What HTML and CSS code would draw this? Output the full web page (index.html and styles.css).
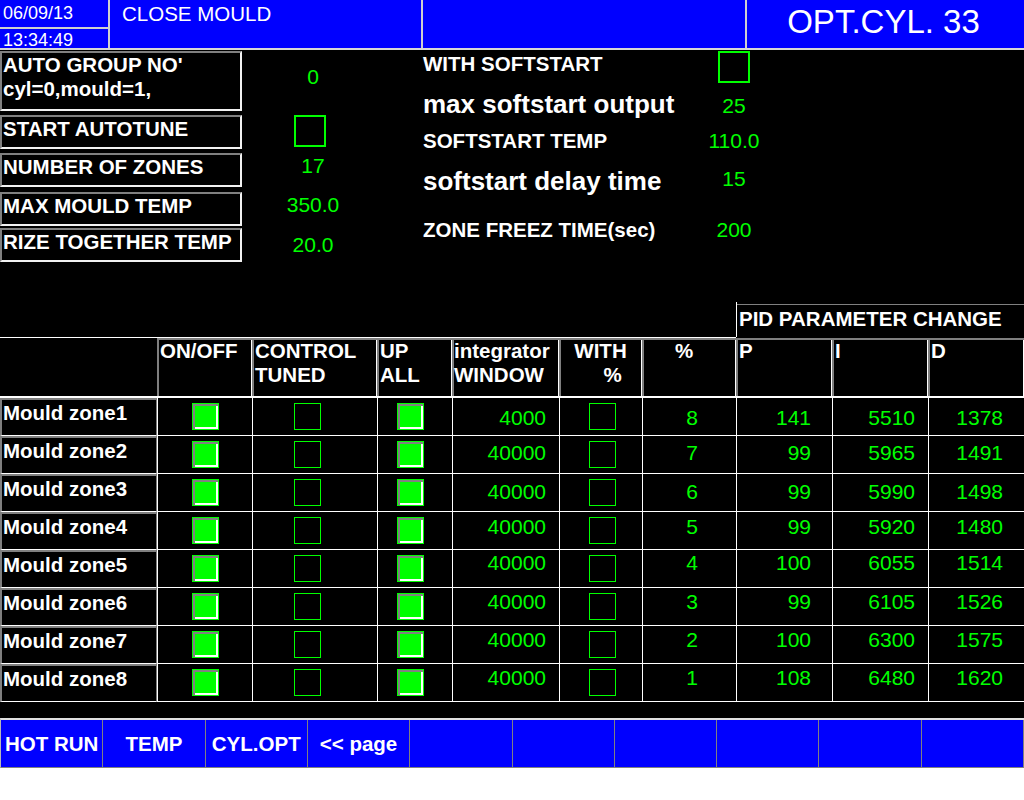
FILE: index.html
```html
<!DOCTYPE html>
<html>
<head>
<meta charset="utf-8">
<title>OPT.CYL. 33</title>
<link rel="stylesheet" href="styles.css">
</head>
<body>
<div class="screen">
  <header class="topbar">
    <div class="clock">
      <div class="date">06/09/13</div>
      <div class="time">13:34:49</div>
    </div>
    <div class="status">CLOSE MOULD</div>
    <div class="blank"></div>
    <div class="pagetitle">OPT.CYL. 33</div>
  </header>

  <section class="settings">
    <div class="lcol">
      <div class="lrow r1"><div class="lbox">AUTO GROUP NO'<br>cyl=0,mould=1,</div><div class="lval up">0</div></div>
      <div class="lrow r2"><div class="lbox">START AUTOTUNE</div><div class="lval chkval"><span class="cb big"></span></div></div>
      <div class="lrow r3"><div class="lbox">NUMBER OF ZONES</div><div class="lval up">17</div></div>
      <div class="lrow r4"><div class="lbox">MAX MOULD TEMP</div><div class="lval up">350.0</div></div>
      <div class="lrow r5"><div class="lbox">RIZE TOGETHER TEMP</div><div class="lval">20.0</div></div>
    </div>
    <div class="rcol">
      <div class="rrow rr1"><div class="rlabel">WITH SOFTSTART</div><div class="rval"><span class="cb big"></span></div></div>
      <div class="rrow rr2"><div class="rlabel">max softstart output</div><div class="rval">25</div></div>
      <div class="rrow rr3"><div class="rlabel">SOFTSTART TEMP</div><div class="rval">110.0</div></div>
      <div class="rrow rr4"><div class="rlabel">softstart delay time</div><div class="rval">15</div></div>
      <div class="rrow rr5"><div class="rlabel">ZONE FREEZ TIME(sec)</div><div class="rval">200</div></div>
    </div>
  </section>

  <section class="zones">
    <div class="pidrow"><div class="pid"><div class="pid-in">PID PARAMETER CHANGE</div></div></div>
    <div class="thead">
      <div class="hc first"></div>
      <div class="hc">ON/OFF</div>
      <div class="hc">CONTROL<br>TUNED</div>
      <div class="hc">UP<br>ALL</div>
      <div class="hc tight">integrator<br>WINDOW</div>
      <div class="hc center">WITH<br><span class="pct2">%</span></div>
      <div class="hc pct">%</div>
      <div class="hc pidc">P</div>
      <div class="hc pidc">I</div>
      <div class="hc pidc">D</div>
    </div>

    <div class="trow k1">
      <div class="name">Mould zone1</div>
      <div class="dc c-on"><span class="cb on"></span></div>
      <div class="dc c-ct"><span class="cb"></span></div>
      <div class="dc c-up"><span class="cb on"></span></div>
      <div class="dc num n-win">4000</div>
      <div class="dc c-wp"><span class="cb"></span></div>
      <div class="dc num n-pct">8</div>
      <div class="dc num n-p">141</div>
      <div class="dc num n-i">5510</div>
      <div class="dc num n-d">1378</div>
    </div>
    <div class="trow k2">
      <div class="name">Mould zone2</div>
      <div class="dc c-on"><span class="cb on"></span></div>
      <div class="dc c-ct"><span class="cb"></span></div>
      <div class="dc c-up"><span class="cb on"></span></div>
      <div class="dc num n-win">40000</div>
      <div class="dc c-wp"><span class="cb"></span></div>
      <div class="dc num n-pct">7</div>
      <div class="dc num n-p">99</div>
      <div class="dc num n-i">5965</div>
      <div class="dc num n-d">1491</div>
    </div>
    <div class="trow k3">
      <div class="name">Mould zone3</div>
      <div class="dc c-on"><span class="cb on"></span></div>
      <div class="dc c-ct"><span class="cb"></span></div>
      <div class="dc c-up"><span class="cb on"></span></div>
      <div class="dc num n-win">40000</div>
      <div class="dc c-wp"><span class="cb"></span></div>
      <div class="dc num n-pct">6</div>
      <div class="dc num n-p">99</div>
      <div class="dc num n-i">5990</div>
      <div class="dc num n-d">1498</div>
    </div>
    <div class="trow k4">
      <div class="name">Mould zone4</div>
      <div class="dc c-on"><span class="cb on"></span></div>
      <div class="dc c-ct"><span class="cb"></span></div>
      <div class="dc c-up"><span class="cb on"></span></div>
      <div class="dc num n-win">40000</div>
      <div class="dc c-wp"><span class="cb"></span></div>
      <div class="dc num n-pct">5</div>
      <div class="dc num n-p">99</div>
      <div class="dc num n-i">5920</div>
      <div class="dc num n-d">1480</div>
    </div>
    <div class="trow k5">
      <div class="name">Mould zone5</div>
      <div class="dc c-on"><span class="cb on"></span></div>
      <div class="dc c-ct"><span class="cb"></span></div>
      <div class="dc c-up"><span class="cb on"></span></div>
      <div class="dc num n-win">40000</div>
      <div class="dc c-wp"><span class="cb"></span></div>
      <div class="dc num n-pct">4</div>
      <div class="dc num n-p">100</div>
      <div class="dc num n-i">6055</div>
      <div class="dc num n-d">1514</div>
    </div>
    <div class="trow k6">
      <div class="name">Mould zone6</div>
      <div class="dc c-on"><span class="cb on"></span></div>
      <div class="dc c-ct"><span class="cb"></span></div>
      <div class="dc c-up"><span class="cb on"></span></div>
      <div class="dc num n-win">40000</div>
      <div class="dc c-wp"><span class="cb"></span></div>
      <div class="dc num n-pct">3</div>
      <div class="dc num n-p">99</div>
      <div class="dc num n-i">6105</div>
      <div class="dc num n-d">1526</div>
    </div>
    <div class="trow k7">
      <div class="name">Mould zone7</div>
      <div class="dc c-on"><span class="cb on"></span></div>
      <div class="dc c-ct"><span class="cb"></span></div>
      <div class="dc c-up"><span class="cb on"></span></div>
      <div class="dc num n-win">40000</div>
      <div class="dc c-wp"><span class="cb"></span></div>
      <div class="dc num n-pct">2</div>
      <div class="dc num n-p">100</div>
      <div class="dc num n-i">6300</div>
      <div class="dc num n-d">1575</div>
    </div>
    <div class="trow k8">
      <div class="name">Mould zone8</div>
      <div class="dc c-on"><span class="cb on"></span></div>
      <div class="dc c-ct"><span class="cb"></span></div>
      <div class="dc c-up"><span class="cb on"></span></div>
      <div class="dc num n-win">40000</div>
      <div class="dc c-wp"><span class="cb"></span></div>
      <div class="dc num n-pct">1</div>
      <div class="dc num n-p">108</div>
      <div class="dc num n-i">6480</div>
      <div class="dc num n-d">1620</div>
    </div>
  </section>

  <nav class="softkeys">
    <div class="key">HOT RUN</div>
    <div class="key">TEMP</div>
    <div class="key">CYL.OPT</div>
    <div class="key">&lt;&lt; page</div>
    <div class="key"></div>
    <div class="key"></div>
    <div class="key"></div>
    <div class="key"></div>
    <div class="key"></div>
    <div class="key"></div>
  </nav>
</div>
</body>
</html>
```

FILE: styles.css
```css
html, body {
  margin: 0;
  padding: 0;
  background: #ffffff;
}

.screen {
  width: 1024px;
  height: 768px;
  background: #000000;
  color: #ffffff;
  font-family: "Liberation Sans", Arial, sans-serif;
  display: flex;
  flex-direction: column;
}

/* ---------- top bar ---------- */
.topbar {
  display: flex;
  height: 50px;
  box-sizing: border-box;
  background: #0000ff;
  border-bottom: 2px solid #d8d8d8;
}

.clock {
  width: 110px;
  box-sizing: border-box;
  border-right: 2px solid #cfcfcf;
  display: flex;
  flex-direction: column;
  font-size: 18px;
}

.date {
  height: 29px;
  box-sizing: border-box;
  border-bottom: 2px solid #cfcfcf;
  line-height: 27px;
  padding-left: 3px;
}

.time {
  height: 19px;
  line-height: 22px;
  padding-left: 3px;
}

.status {
  width: 313px;
  box-sizing: border-box;
  border-right: 2px solid #cfcfcf;
  font-size: 20.5px;
  line-height: 27px;
  padding-left: 12px;
}

.blank {
  width: 324px;
  box-sizing: border-box;
  border-right: 2px solid #cfcfcf;
}

.pagetitle {
  flex: 1;
  text-align: center;
  font-size: 33px;
  line-height: 43px;
  padding-right: 4px;
}

/* ---------- settings ---------- */
.settings {
  display: flex;
  height: 252px;
}

.lcol {
  width: 384px;
  display: flex;
  flex-direction: column;
  padding-top: 1px;
}

.lrow {
  display: flex;
  height: 34px;
  margin-bottom: 4px;
}

.lrow.r1 { height: 60px; }
.lrow.r3 { margin-bottom: 5px; }
.lrow.r4 { margin-bottom: 2px; }

.lbox {
  width: 242px;
  box-sizing: border-box;
  border-style: solid;
  border-width: 2px;
  border-color: #808080 #f2f2f2 #f2f2f2 #808080;
  padding: 0 0 0 1px;
  font-size: 20.5px;
  font-weight: bold;
  line-height: 24px;
  white-space: nowrap;
}

.lval {
  width: 142px;
  box-sizing: border-box;
  display: flex;
  align-items: center;
  justify-content: center;
  color: #00ff00;
  font-size: 21px;
}

.lval.up { padding-bottom: 8px; }
.lval.chkval { padding-bottom: 2px; padding-right: 6px; }

.rcol {
  margin-left: 39px;
  display: flex;
  flex-direction: column;
}

.rrow {
  display: flex;
  align-items: flex-start;
}

.rlabel {
  width: 267px;
  font-weight: bold;
  font-size: 20.5px;
  white-space: nowrap;
}

.rval {
  width: 88px;
  display: flex;
  justify-content: center;
  color: #00ff00;
  font-size: 21px;
}

.rr1 { height: 34px; }
.rr1 .rlabel { line-height: 27px; }
.rr1 .rval { padding-top: 1px; }

.rr2 { height: 41px; }
.rr2 .rlabel { font-size: 26px; line-height: 41px; }
.rr2 .rval { line-height: 44px; }

.rr3 { height: 32px; }
.rr3 .rlabel, .rr3 .rval { line-height: 32px; }

.rr4 { height: 48px; }
.rr4 .rlabel { font-size: 26px; line-height: 48px; }
.rr4 .rval { line-height: 43px; }

.rr5 { height: 49px; }
.rr5 .rlabel, .rr5 .rval { line-height: 49px; }

/* ---------- checkboxes ---------- */
.cb {
  display: block;
  width: 27px;
  height: 27px;
  box-sizing: border-box;
  border: 1px solid #00ff00;
}

.cb.big {
  width: 32px;
  height: 32px;
  border-width: 2px;
}

.cb.on {
  background: #00ff00;
  box-shadow: inset 2px 2px 0 #808080, inset -2px -2px 0 #ffffff;
}

/* ---------- zone table ---------- */
.zones {
  display: flex;
  flex-direction: column;
}

.pidrow {
  height: 35px;
  display: flex;
}

.pid {
  margin-left: 736px;
  flex: 1;
  border-left: 1px solid #ffffff;
  padding-top: 2px;
}

.pid-in {
  border-top: 1px solid #808080;
  padding: 2px 0 0 2px;
  line-height: 24px;
  font-weight: bold;
  font-size: 20.5px;
  white-space: nowrap;
}

.thead,
.trow {
  display: grid;
  grid-template-columns: 157px 95px 125px 75px 107px 83px 94px 96px 96px 96px;
}

.thead { height: 61px; }

.hc {
  border-top: 1px solid #ffffff;
  border-bottom: 2px solid #ffffff;
  box-shadow: inset 2px 2px 0 #7f7f7f, inset -1px 0 0 #ffffff;
  padding: 1px 3px 0;
  line-height: 24px;
  font-weight: bold;
  font-size: 20.5px;
  white-space: nowrap;
}

.hc.first { box-shadow: none; }
.hc.tight { padding-left: 2px; }
.hc.center { text-align: center; }
.hc.pct { padding-left: 33px; }
.hc.pidc { border-top-color: #000000; }
.pct2 { padding-left: 24px; }

.trow { height: 38px; }

.name {
  box-sizing: border-box;
  border-style: solid;
  border-width: 2px 1px 1px 2px;
  border-color: #7f7f7f #7f7f7f #ffffff #7f7f7f;
  padding: 1px 0 0 1px;
  line-height: 24px;
  font-weight: bold;
  font-size: 20.5px;
  white-space: nowrap;
}

.dc {
  box-sizing: border-box;
  border-left: 1px solid #ffffff;
  border-bottom: 1px solid #ffffff;
  display: flex;
  align-items: center;
  color: #00ff00;
  font-size: 21px;
}

.dc.num {
  align-items: flex-start;
  justify-content: flex-end;
  line-height: 24px;
  padding-top: 6px;
}

.k1 .num { padding-top: 8px; }
.k2 .num { padding-top: 5px; }
.k3 .num { padding-top: 6px; }
.k4 .num { padding-top: 3px; }
.k5 .num { padding-top: 1px; }
.k6 .num { padding-top: 2px; }
.k7 .num { padding-top: 2px; }
.k8 .num { padding-top: 2px; }

.c-on { padding-left: 34px; }
.c-ct { padding-left: 41px; }
.c-up { padding-left: 19px; }
.c-wp { padding-left: 29px; }

.n-win { padding-right: 13px; }
.n-pct { padding-right: 38px; }
.n-p { padding-right: 21px; }
.n-i { padding-right: 13px; }
.n-d { padding-right: 21px; }

/* ---------- soft keys ---------- */
.softkeys {
  margin-top: 16px;
  height: 50px;
  box-sizing: border-box;
  display: grid;
  grid-template-columns: repeat(10, 1fr);
  background: #0000ff;
  border-top: 2px solid #e0e0e0;
  border-bottom: 1px solid #808080;
  border-left: 1px solid #b8b8b8;
}

.key {
  border-right: 1px solid #808080;
  display: flex;
  align-items: center;
  justify-content: center;
  font-weight: bold;
  font-size: 20.5px;
  white-space: nowrap;
}
```
